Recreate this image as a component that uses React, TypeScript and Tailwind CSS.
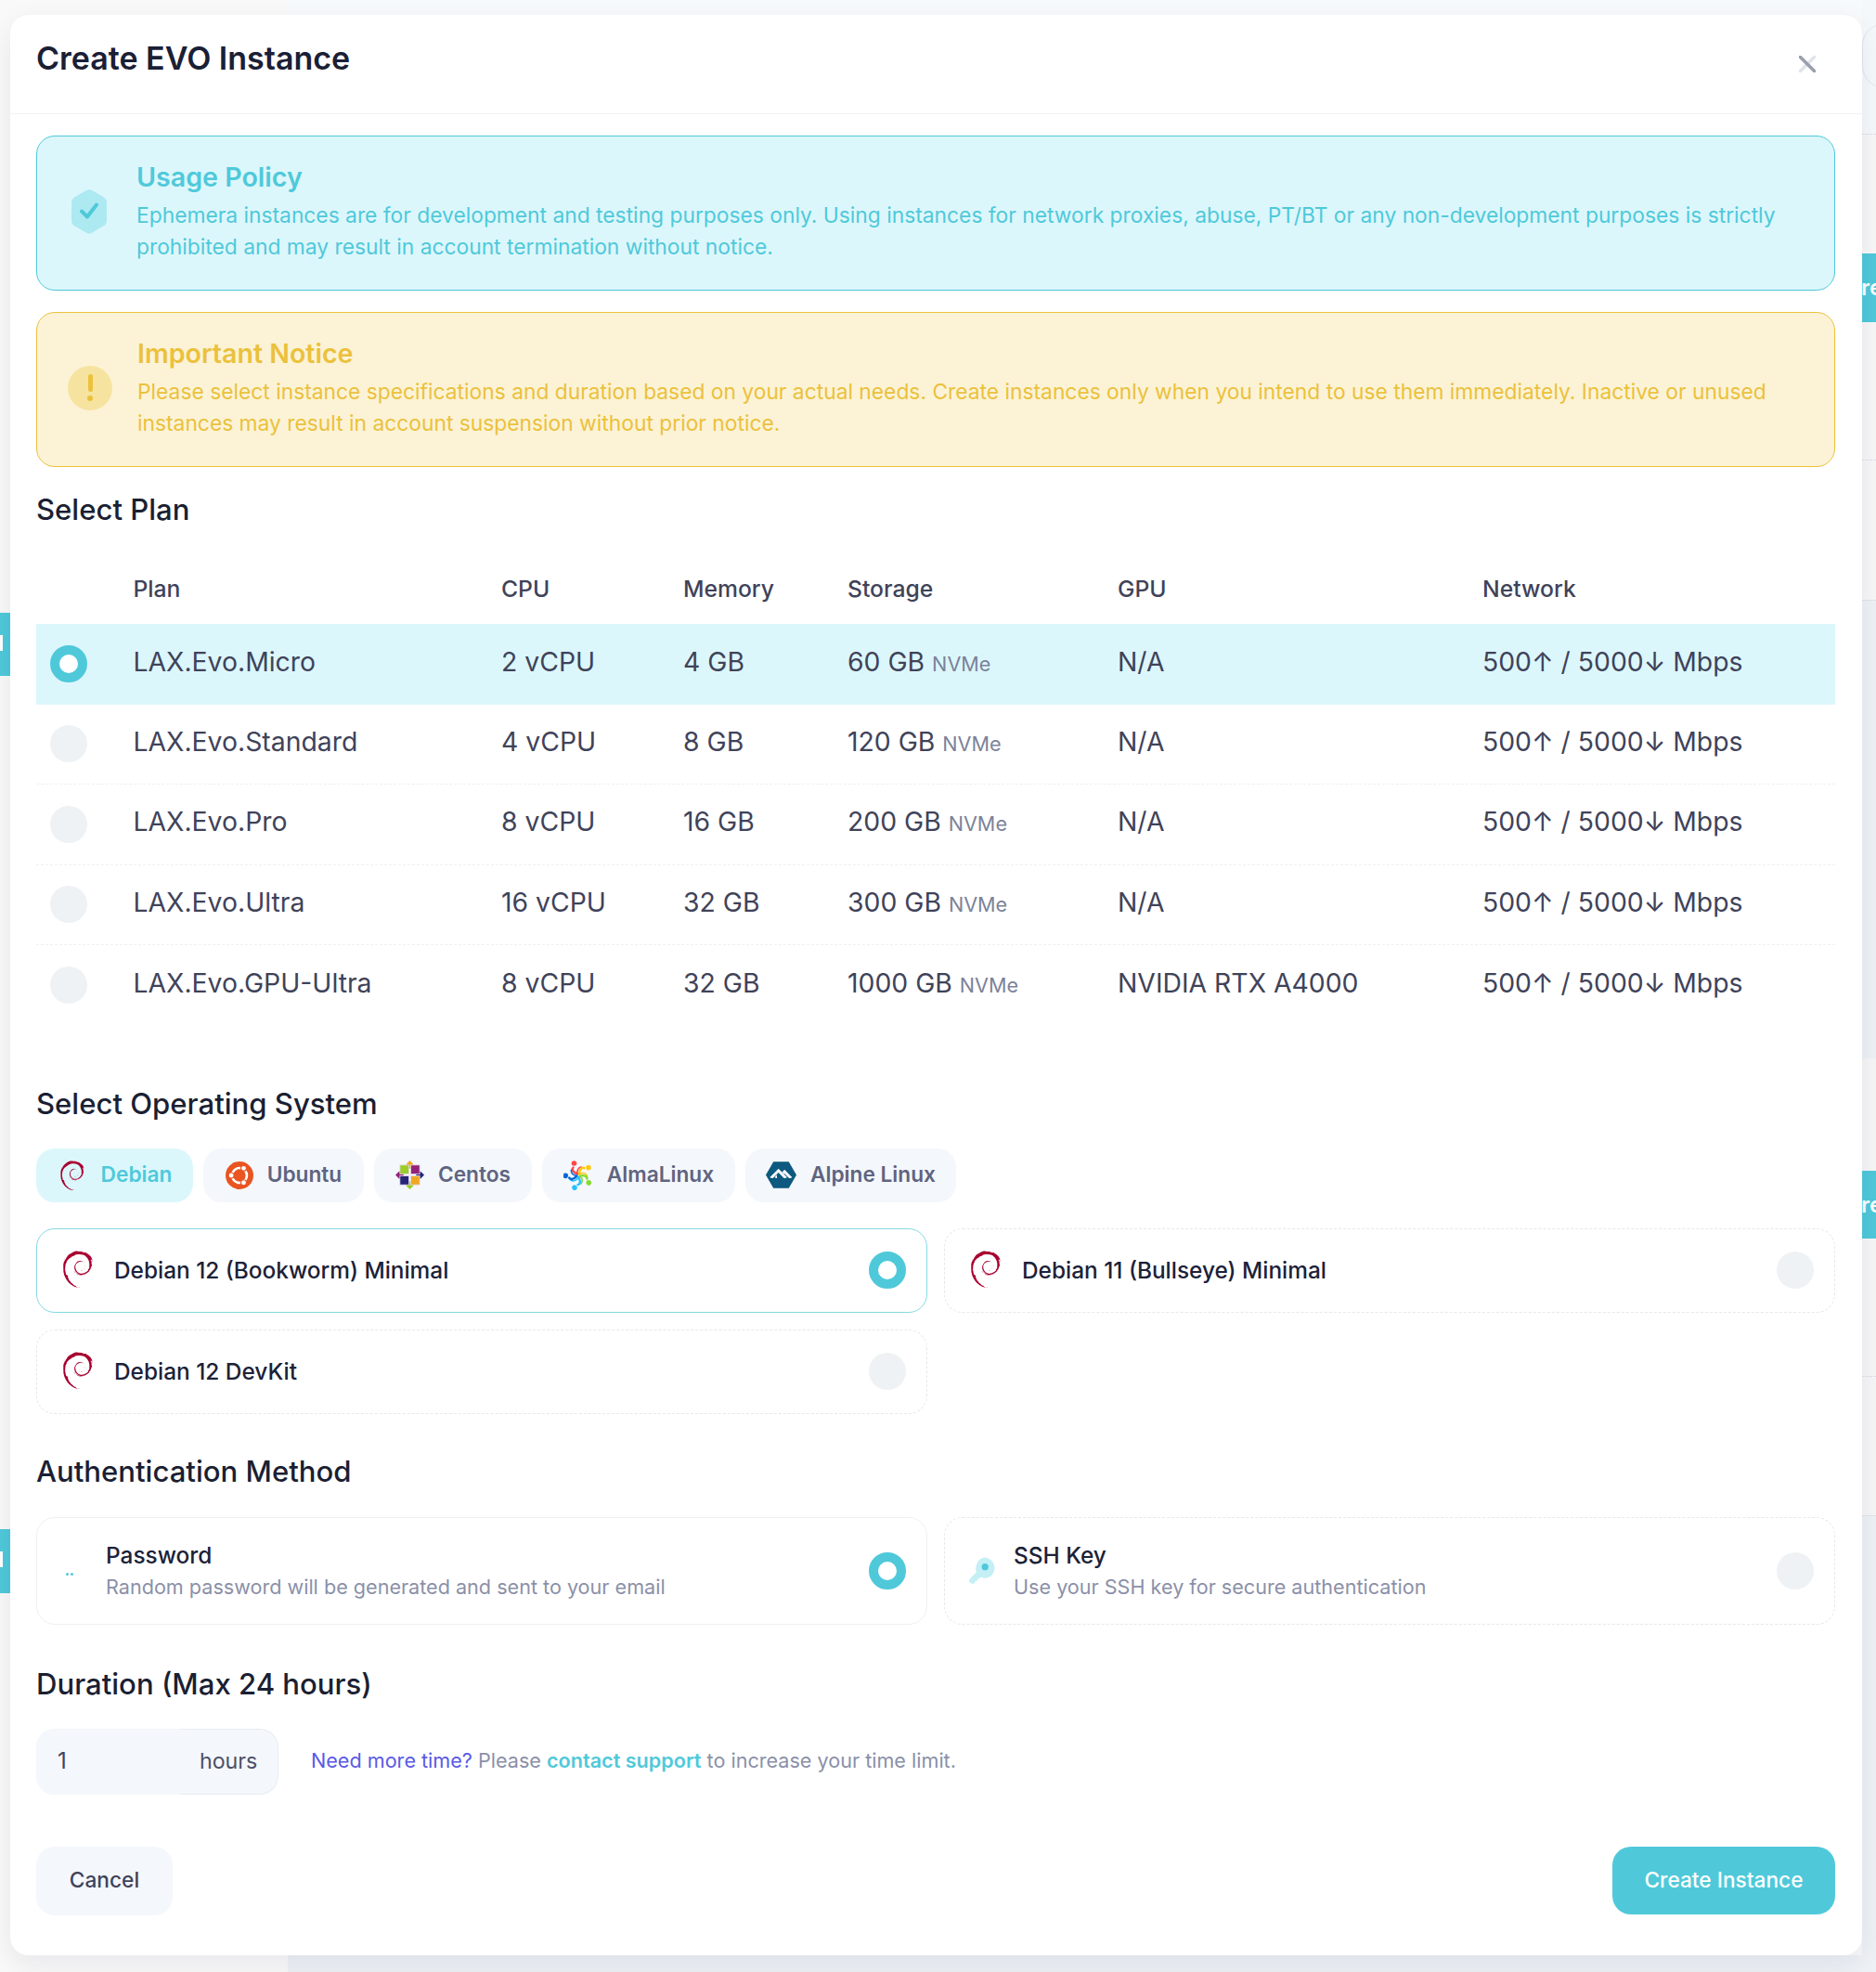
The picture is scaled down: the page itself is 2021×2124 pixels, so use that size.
import React from "react";
import { SiDebian, SiAlpinelinux } from "react-icons/si";

const plans = [
  ["LAX.Evo.Micro", "2 vCPU", "4 GB", "60 GB", "N/A"],
  ["LAX.Evo.Standard", "4 vCPU", "8 GB", "120 GB", "N/A"],
  ["LAX.Evo.Pro", "8 vCPU", "16 GB", "200 GB", "N/A"],
  ["LAX.Evo.Ultra", "16 vCPU", "32 GB", "300 GB", "N/A"],
  ["LAX.Evo.GPU-Ultra", "8 vCPU", "32 GB", "1000 GB", "NVIDIA RTX A4000"],
];

function Radio({ on }: { on?: boolean }) {
  return on ? (
    <span className="block size-10 shrink-0 rounded-full border-[10px] border-[#4fc9da] bg-white" />
  ) : (
    <span className="block size-10 shrink-0 rounded-full bg-[#eff2f5]" />
  );
}

function Debian({ className }: { className: string }) {
  return <SiDebian className={className} color="#a80030" />;
}

function Ubuntu() {
  return (
    <svg viewBox="0 0 32 32" className="size-[30px]">
      <circle cx="16" cy="16" r="16" fill="#e95420" />
      <circle cx="16" cy="16" r="8.500" fill="none" stroke="#fff" strokeWidth="2.800" />
      <circle cx="6.500" cy="16" r="3.200" fill="#fff" stroke="#e95420" strokeWidth="1.200" />
      <circle cx="20.800" cy="7.800" r="3.200" fill="#fff" stroke="#e95420" strokeWidth="1.200" />
      <circle cx="20.800" cy="24.200" r="3.200" fill="#fff" stroke="#e95420" strokeWidth="1.200" />
    </svg>
  );
}

function Centos() {
  return (
    <svg viewBox="0 0 32 32" className="size-[31px]">
      <path d="M16 0l4 4v5h-8V4z" fill="#efa724" />
      <path d="M32 16l-4 4h-5v-8h5z" fill="#262577" />
      <path d="M16 32l-4-4v-5h8v5z" fill="#9ccd2a" />
      <path d="M0 16l4-4h5v8H4z" fill="#932279" />
      <rect x="5" y="5" width="10" height="10" fill="#9ccd2a" stroke="#e8dfee" strokeWidth="0.800" />
      <rect x="17" y="5" width="10" height="10" fill="#932279" stroke="#e8dfee" strokeWidth="0.800" />
      <rect x="5" y="17" width="10" height="10" fill="#262577" stroke="#e8dfee" strokeWidth="0.800" />
      <rect x="17" y="17" width="10" height="10" fill="#efa724" stroke="#e8dfee" strokeWidth="0.800" />
    </svg>
  );
}

function Alma() {
  const parts: [number, string][] = [
    [0, "#ff4649"],
    [72, "#ffcb12"],
    [144, "#86da2f"],
    [216, "#24c2ff"],
    [288, "#0069da"],
  ];
  return (
    <svg viewBox="0 0 32 32" className="size-[32px]">
      {parts.map(([r, c]) => (
        <g key={c} transform={`rotate(${r} 16 16)`}>
          <circle cx="11.500" cy="3" r="2.800" fill={c} />
          <path d="M15 14.500C10.500 13 8.500 9.500 10.500 7.500" fill="none" stroke={c} strokeWidth="2.400" strokeLinecap="round" />
          <path d="M15 14.500C14.500 11 15.500 8 19 7" fill="none" stroke={c} strokeWidth="1.600" strokeLinecap="round" />
        </g>
      ))}
    </svg>
  );
}

function KeyIcon() {
  return (
    <svg viewBox="0 0 30 30" className="size-[32px]">
      <path d="M17 1.500a10.500 10.500 0 0 1 3 20.600c-2.400.7-4.500-.2-6-1l-1.500 1.500-2 .2-.3 2-2.200.5-.4 1.800c-1.500 1.600-4 .6-5-.6-1.200-1.400-.5-3 .5-4l6.300-6.300c-1-2-1.200-4.300-.2-6.600A10.500 10.500 0 0 1 17 1.500z" fill="#c3eff5" />
      <circle cx="18" cy="11" r="3.400" fill="#4fc9da" />
    </svg>
  );
}

function Section({ children, className }: { children: React.ReactNode; className: string }) {
  return <h3 className={`text-[31.1px] leading-9 font-medium text-[#1b1f33] ${className}`}>{children}</h3>;
}

function OsCard({ name, on }: { name: string; on?: boolean }) {
  return (
    <div
      className={`flex h-[91px] items-center rounded-[20px] pr-[22px] pl-[24px] ${
        on ? "border-[1.5px] border-[#85d9e5]" : "border border-dashed border-[#e6e8ee]"
      }`}
    >
      <Debian className="mt-[-2px] size-[40px] shrink-0" />
      <span className="ml-[19px] flex-1 text-[24.4px] font-medium text-[#1b2238]">{name}</span>
      <Radio on={on} />
    </div>
  );
}

function Tab({ label, icon, on, w }: { label: string; icon: React.ReactNode; on?: boolean; w: string }) {
  return (
    <div
      className={`flex h-[58px] items-center justify-center gap-[15px] rounded-[20px] text-[22.68px] font-semibold ${w} ${
        on ? "bg-[#dcf7fc] text-[#4fc9da]" : "bg-[#f4f7fb] text-[#5f6480]"
      }`}
    >
      {icon}
      <span>{label}</span>
    </div>
  );
}

function Strip({ className }: { className: string }) {
  return <div className={`w-full ${className}`} />;
}

export default function App() {
  return (
    <div className="relative h-[2124px] w-[2021px] overflow-hidden bg-[#f9f9f9] font-['Inter',sans-serif]">
      {/* dimmed page peeking out behind the dialog */}
      <div className="absolute top-0 left-[310px] h-[16px] w-[1711px] bg-[#f6fafd]" />
      <div className="absolute bottom-0 left-[310px] h-[18px] w-[1711px] bg-[#eef1f5]" />
      <div className="absolute top-0 right-0 flex h-[2124px] w-[15px] flex-col">
        <Strip className="h-[144px] bg-[#f5f8fb]" />
        <Strip className="h-[351px] border-t border-dashed border-[#dfe1e6] bg-[#f7f7f8]" />
        <Strip className="h-[151px] border-t border-dashed border-[#dfe1e6] bg-[#f7f7f8]" />
        <Strip className="h-[494px] border-t border-dashed border-[#dfe1e6] bg-[#eef2f6]" />
        <Strip className="h-[342px] bg-[#f6f6f7]" />
        <Strip className="h-[150px] border-t border-dashed border-[#dfe1e6] bg-[#f6f6f7]" />
        <Strip className="flex-1 border-t border-dashed border-[#dfe1e6] bg-[#eef2f6]" />
      </div>
      <div className="absolute top-[25px] left-[2006px] h-[70px] w-[30px] rounded-l-[24px] border border-[#e3e6ec]" />
      <div className="absolute top-[273px] right-0 flex h-[74px] w-[15px] items-center overflow-hidden bg-[#4fc9da] text-[24px] font-semibold text-white">
        <span className="ml-[-1px]">re</span>
      </div>
      <div className="absolute top-[1261px] right-0 flex h-[73px] w-[15px] items-center overflow-hidden bg-[#4fc9da] text-[24px] font-semibold text-white">
        <span className="ml-[-1px]">re</span>
      </div>
      <div className="absolute top-[660px] left-0 h-[68px] w-[11px] bg-[#4fc9da]">
        <div className="mt-[24px] h-[17px] w-[3px] bg-white" />
      </div>
      <div className="absolute top-[1647px] left-0 h-[69px] w-[11px] bg-[#4fc9da]">
        <div className="mt-[24px] h-[17px] w-[3px] bg-white" />
      </div>

      <div className="absolute top-[16px] left-[11px] flex h-[2090px] w-[1995px] flex-col rounded-[20px] bg-white shadow-[0_10px_30px_rgba(20,30,60,0.08)]">
        <div className="flex h-[107px] shrink-0 items-start justify-between border-b border-[#f1f1f4] pt-[27px] pr-[50px] pl-[28px]">
          <h2 className="text-[34px] leading-10 font-semibold text-[#1a2035]">Create EVO Instance</h2>
          <svg viewBox="0 0 18 18" className="mt-[17px] size-[18px]">
            <path d="M1 17L17 1" stroke="#e1e3ea" strokeWidth="3.500" strokeLinecap="round" />
            <path d="M1 1l16 16" stroke="#9a9fb0" strokeWidth="3.500" strokeLinecap="round" />
          </svg>
        </div>

        <div className="flex flex-1 flex-col pt-[23px] pr-[29px] pl-[28px]">
          <div className="flex h-[167px] items-center rounded-[20px] border-[1.5px] border-[#4fc9da] bg-[#dcf7fc] pr-[40px] pb-[4px] pl-[37px] text-[#4fc9da]">
            <svg viewBox="0 0 38 48" className="mr-[32px] h-[48px] w-[38px] shrink-0">
              <path d="M15.500 1.300a7 7 0 0 1 7 0l12 6.900A7 7 0 0 1 38 14.300v19.400a7 7 0 0 1-2.600 5.400L23.300 46a7 7 0 0 1-8.600 0L2.600 39.100A7 7 0 0 1 0 33.700V14.300a7 7 0 0 1 3.500-6.100z" fill="#ade9f1" />
              <path d="M11 23.500l6 6 10-13" fill="none" stroke="#4fc9da" strokeWidth="4" strokeLinecap="round" strokeLinejoin="round" />
            </svg>
            <div>
              <div className="text-[28.6px] leading-9 font-semibold">Usage Policy</div>
              <p className="mt-[6px] text-[22.8px] leading-[34px]">
                Ephemera instances are for development and testing purposes only. Using instances for network proxies, abuse, PT/BT or any non-development purposes is strictly prohibited and may result in account termination without notice.
              </p>
            </div>
          </div>

          <div className="mt-[23px] flex h-[167px] items-center rounded-[20px] border-[1.5px] border-[#ebc13c] bg-[#fcf3d6] pr-[40px] pb-[4px] pl-[33px] text-[#ebc13c]">
            <div className="mr-[27px] flex size-[48px] shrink-0 flex-col items-center justify-center gap-[4px] rounded-full bg-[#f7e3a0]">
              <span className="block h-[19px] w-[5px] rounded-full bg-[#ebc13c]" />
              <span className="block size-[6px] rounded-full bg-[#ebc13c]" />
            </div>
            <div>
              <div className="text-[28.6px] leading-9 font-semibold">Important Notice</div>
              <p className="mt-[6px] text-[22.8px] leading-[34px]">
                Please select instance specifications and duration based on your actual needs. Create instances only when you intend to use them immediately. Inactive or unused instances may result in account suspension without prior notice.
              </p>
            </div>
          </div>

          <Section className="mt-[28px]">Select Plan</Section>

          <div className="mt-[39px] grid h-[66px] grid-cols-[104.5px_396.5px_196px_177px_291px_393px_380px] items-start pt-[12px] text-[24.7px] leading-8 font-medium text-[#3f4359]">
            <span />
            <span>Plan</span>
            <span>CPU</span>
            <span>Memory</span>
            <span>Storage</span>
            <span>GPU</span>
            <span>Network</span>
          </div>
          <div>
            {plans.map((p, i) => (
              <div
                key={p[0]}
                className={`grid h-[86.5px] grid-cols-[104.5px_396.5px_196px_177px_291px_393px_380px] items-center text-[28.35px] text-[#3f4359] ${
                  i === 0 ? "bg-[#dcf7fc]" : i < 4 ? "border-b border-dashed border-[#eff0f3]" : ""
                }`}
              >
                <span className="pl-[15px]">
                  <Radio on={i === 0} />
                </span>
                <span className="mb-[4px]">{p[0]}</span>
                <span className="mb-[4px]">{p[1]}</span>
                <span className="mb-[4px]">{p[2]}</span>
                <span className="mb-[4px]">
                  {p[3]} <span className="text-[21.6px] text-[#7c8299]">NVMe</span>
                </span>
                <span className="mb-[4px]">{p[4]}</span>
                <span className="mb-[4px]">500↑ / 5000↓ Mbps</span>
              </div>
            ))}
          </div>

          <Section className="mt-[66px]">Select Operating System</Section>

          <div className="mt-[30px] flex gap-[11px]">
            <Tab w="w-[169px]" on label="Debian" icon={<Debian className="size-[32px]" />} />
            <Tab w="w-[173px]" label="Ubuntu" icon={<Ubuntu />} />
            <Tab w="w-[170px]" label="Centos" icon={<Centos />} />
            <Tab w="w-[208px]" label="AlmaLinux" icon={<Alma />} />
            <Tab w="w-[227px]" label="Alpine Linux" icon={<SiAlpinelinux className="size-[33px]" color="#0d597f" />} />
          </div>

          <div className="mt-[28px] grid grid-cols-2 gap-x-[18px] gap-y-[18px]">
            <OsCard on name="Debian 12 (Bookworm) Minimal" />
            <OsCard name="Debian 11 (Bullseye) Minimal" />
            <OsCard name="Debian 12 DevKit" />
          </div>

          <Section className="mt-[44px]">Authentication Method</Section>

          <div className="mt-[31px] grid grid-cols-2 gap-x-[18px]">
            <div className="flex h-[116px] items-center rounded-[20px] border border-[#eef0f4] pr-[22px] pl-[31px]">
              <span className="mt-[8px] flex w-[8px] shrink-0 gap-[2px]">
                <span className="size-[3px] shrink-0 rounded-full bg-[#4fc9da]" />
                <span className="size-[3px] shrink-0 rounded-full bg-[#4fc9da]" />
              </span>
              <div className="ml-[35px] flex-1">
                <div className="text-[24.4px] leading-[34px] font-medium text-[#1b2238]">Password</div>
                <div className="text-[21.6px] leading-[34px] text-[#8b90a8]">Random password will be generated and sent to your email</div>
              </div>
              <Radio on />
            </div>
            <div className="flex h-[116px] items-center rounded-[20px] border border-dashed border-[#e6e8ee] pr-[22px] pl-[24px]">
              <KeyIcon />
              <div className="ml-[18px] flex-1">
                <div className="text-[24.4px] leading-[34px] font-medium text-[#1b2238]">SSH Key</div>
                <div className="text-[21.6px] leading-[34px] text-[#8b90a8]">Use your SSH key for secure authentication</div>
              </div>
              <Radio />
            </div>
          </div>

          <Section className="mt-[46px]">Duration (Max 24 hours)</Section>

          <div className="mt-[30px] flex items-center">
            <div className="flex h-[71px] w-[261px] overflow-hidden rounded-[20px] bg-[#f4f7fb]">
              <input
                defaultValue="1"
                className="w-[155px] bg-[#f4f7fb] pl-[23px] text-[24px] text-[#3f4359] outline-none"
              />
              <span className="flex flex-1 items-center rounded-r-[20px] border border-l-0 border-[#e8ecf1] pl-[21px] text-[23.2px] text-[#4b5068]">hours</span>
            </div>
            <p className="mb-[2px] ml-[35px] text-[21.6px] text-[#8b90a8]">
              <span className="text-[#5a5ae6]">Need more time?</span> Please{" "}
              <span className="font-semibold text-[#4fc9da]">contact support</span> to increase your time limit.
            </p>
          </div>

          <div className="mt-[56px] flex justify-between">
            <button className="h-[74px] w-[147px] rounded-[20px] bg-[#f4f7fb] text-[22.68px] font-medium text-[#3f4359]">Cancel</button>
            <button className="h-[73px] w-[240px] rounded-[20px] bg-[#4fc9da] text-[22.68px] font-medium text-white">Create Instance</button>
          </div>
        </div>
      </div>
    </div>
  );
}
